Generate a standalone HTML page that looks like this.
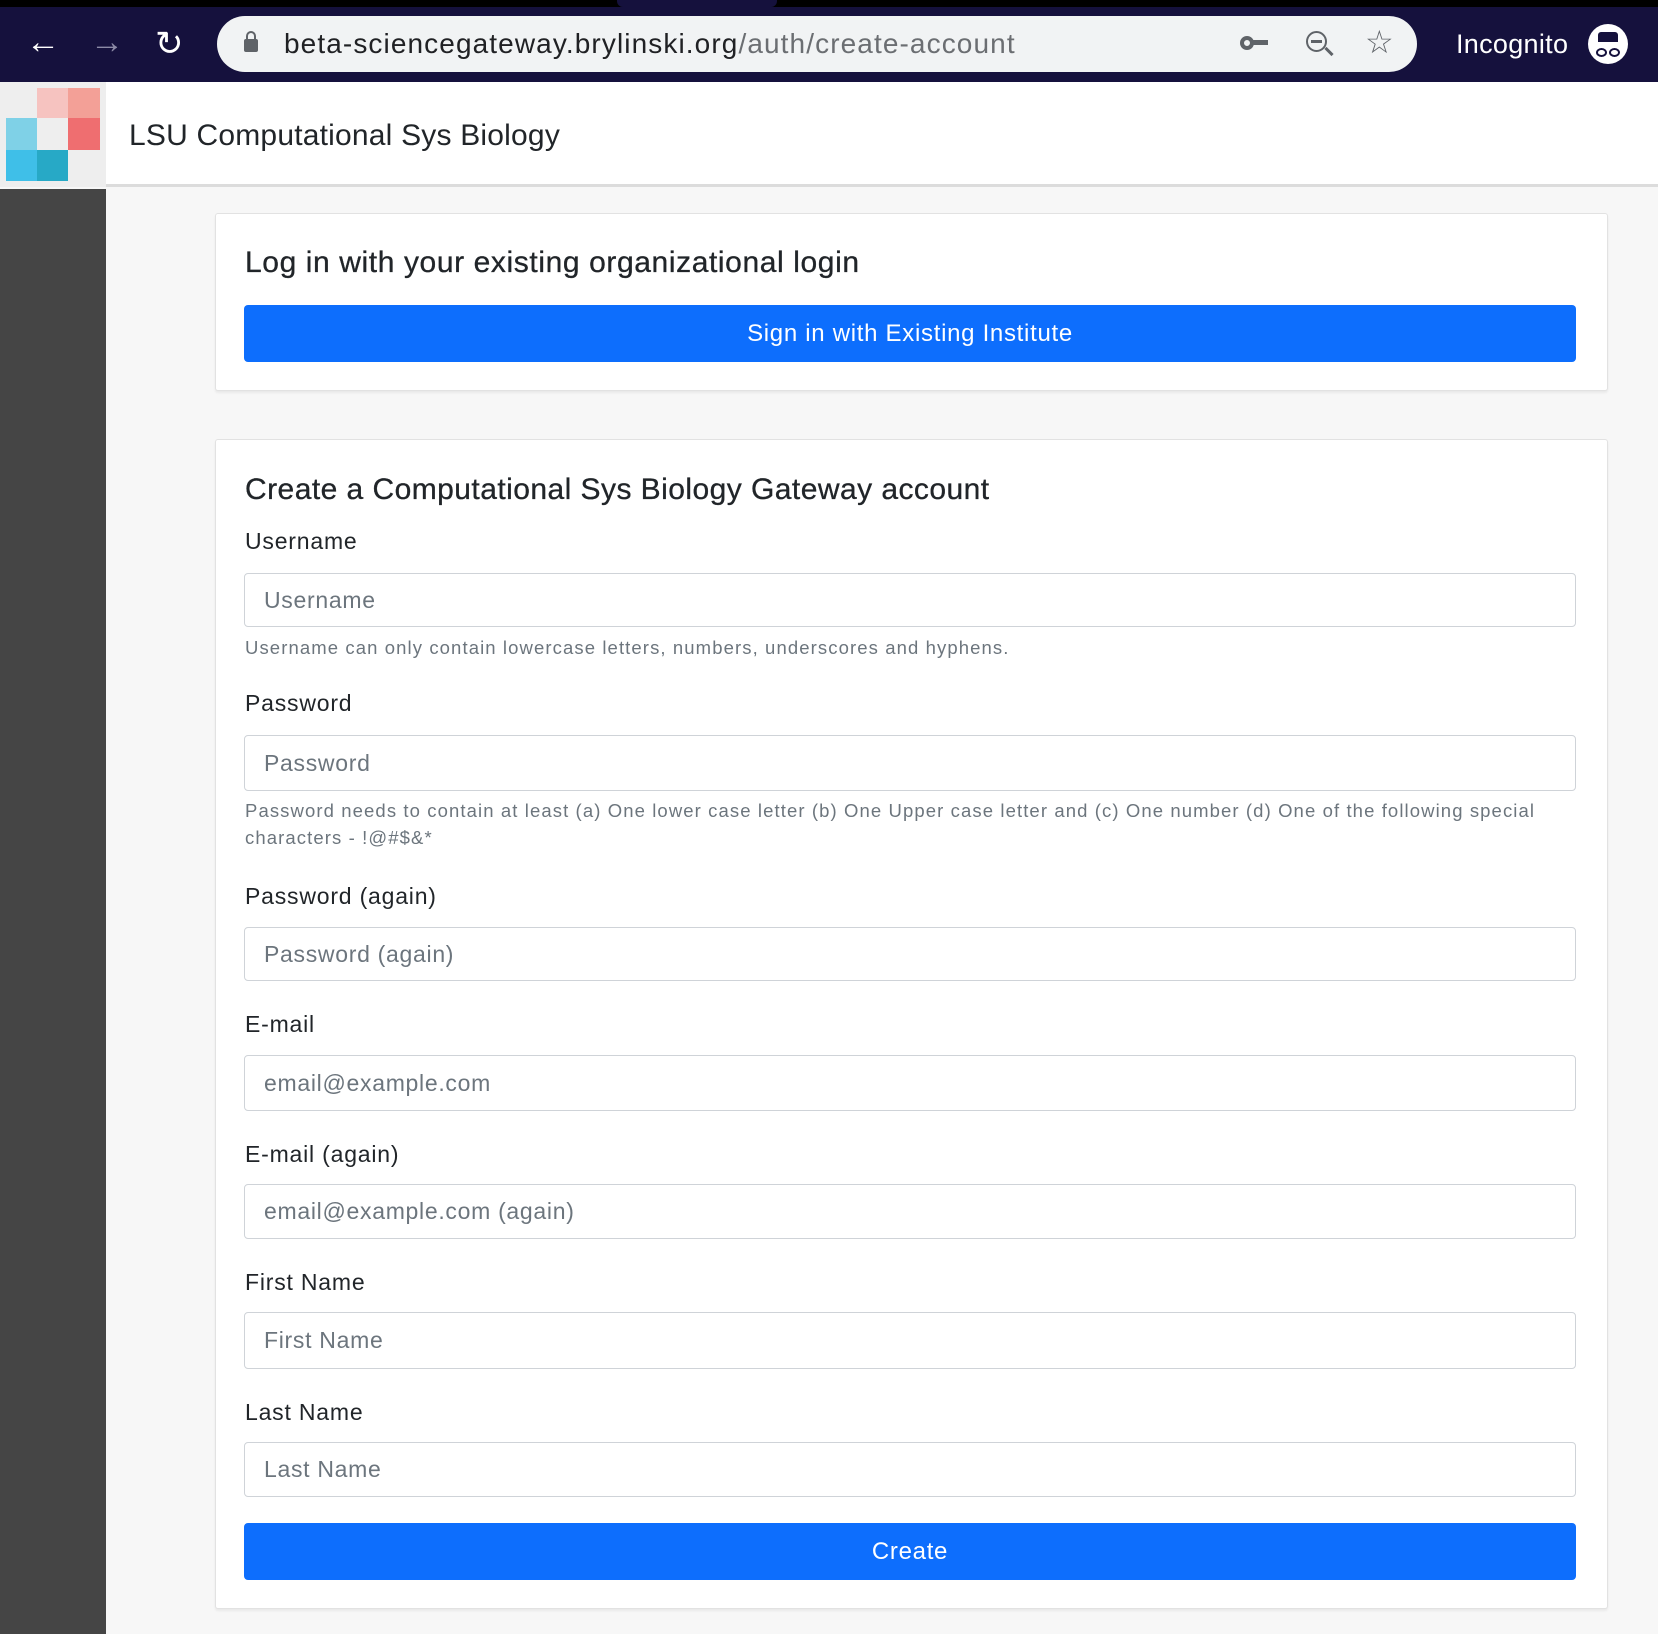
<!DOCTYPE html>
<html><head><meta charset="utf-8"><style>
*{box-sizing:border-box;margin:0;padding:0}
body{width:1658px;height:1634px;overflow:hidden;background:#f7f7f7;font-family:"Liberation Sans",sans-serif;position:relative;color:#212529}
.a{position:absolute}
.lbl{position:absolute;left:245px;font-size:23px;color:#212529;line-height:28px;letter-spacing:0.8px}
.inp{position:absolute;left:244px;width:1332px;border:1.5px solid #cfd3d8;border-radius:4px;background:#fff;font-size:23px;color:#6c757d;padding-left:19px;display:flex;align-items:center;letter-spacing:0.7px}
.help{position:absolute;left:245px;font-size:18.5px;color:#6c757d;line-height:27px;letter-spacing:1.1px}
.btn{position:absolute;left:244px;width:1332px;background:#0d6efd;border-radius:4px;color:#fff;font-size:24px;display:flex;align-items:center;justify-content:center;letter-spacing:0.7px}
.card{position:absolute;left:215px;width:1393px;background:#fff;border:1.5px solid #e2e2e2;border-radius:3px;box-shadow:0 2px 2px rgba(0,0,0,.06)}
h2{position:absolute;left:245px;font-size:30px;font-weight:normal;color:#212529;line-height:36px;-webkit-text-stroke:0.3px #212529}
</style></head><body>
<div class="a" style="left:0;top:0;width:1658px;height:82px;background:#15113d"></div>
<div class="a" style="left:0;top:0;width:1658px;height:7px;background:#000"></div>
<div class="a" style="left:617px;top:0;width:160px;height:7px;background:#15113d;border-radius:0 0 6px 6px"></div>
<div class="a" style="left:26px;top:22px;color:#fff;font-size:34px;line-height:40px">&#8592;</div>
<div class="a" style="left:90px;top:22px;color:#8c8aa6;font-size:34px;line-height:40px">&#8594;</div>
<div class="a" style="left:155px;top:24px;color:#fff;font-size:34px;line-height:40px">&#8635;</div>
<div class="a" style="left:217px;top:16px;width:1200px;height:56px;background:#f1f3f4;border-radius:28px"></div>
<div class="a" style="left:244px;top:39px;width:14px;height:13px;background:#5f6368;border-radius:2px"></div>
<div class="a" style="left:246px;top:31px;width:10px;height:12px;border:2.5px solid #5f6368;border-radius:5px 5px 0 0"></div>
<div class="a" style="left:284px;top:27px;font-size:28px;line-height:34px;color:#202124;letter-spacing:1.1px">beta-sciencegateway.brylinski.org<span style="color:#6b6e72">/auth/create-account</span></div>
<div class="a" style="left:1240px;top:36px;width:14px;height:14px;border:4px solid #5f6368;border-radius:50%"></div>
<div class="a" style="left:1252px;top:40px;width:16px;height:5px;background:#5f6368"></div>
<div class="a" style="left:1306px;top:31px;width:21px;height:21px;border:2.5px solid #5f6368;border-radius:50%"></div>
<div class="a" style="left:1311px;top:40px;width:11px;height:2.5px;background:#5f6368"></div>
<div class="a" style="left:1324px;top:50px;width:10px;height:3px;background:#5f6368;transform:rotate(45deg)"></div>
<div class="a" style="left:1365px;top:24px;font-size:32px;color:#5f6368;line-height:36px">&#9734;</div>
<div class="a" style="left:1456px;top:27px;font-size:27px;color:#fff;line-height:34px;letter-spacing:0.3px">Incognito</div>
<div class="a" style="left:1588px;top:24px;width:40px;height:40px;background:#fff;border-radius:50%"></div>
<div class="a" style="left:1598px;top:32px;width:20px;height:10px;background:#15113d;border-radius:3px 3px 0 0"></div>
<div class="a" style="left:1596px;top:48px;width:11px;height:9px;border:2px solid #15113d;border-radius:50%"></div>
<div class="a" style="left:1609px;top:48px;width:11px;height:9px;border:2px solid #15113d;border-radius:50%"></div>

<div class="a" style="left:0;top:82px;width:1658px;height:105px;background:#fff;border-bottom:3px solid #dcdcdc"></div>
<div class="a" style="left:0;top:82px;width:106px;height:105px;background:#eeeeee"></div>
<div class="a" style="left:37px;top:88px;width:31px;height:30px;background:#f6c3c0"></div>
<div class="a" style="left:68px;top:88px;width:32px;height:30px;background:#f3a097"></div>
<div class="a" style="left:68px;top:118px;width:32px;height:32px;background:#ef6e70"></div>
<div class="a" style="left:6px;top:118px;width:31px;height:32px;background:#7fd1e7"></div>
<div class="a" style="left:6px;top:150px;width:31px;height:31px;background:#3fbfe8"></div>
<div class="a" style="left:37px;top:150px;width:31px;height:31px;background:#27a9c6"></div>
<div class="a" style="left:129px;top:118px;font-size:30px;line-height:36px;color:#212529;letter-spacing:0.2px">LSU Computational Sys Biology</div>
<div class="a" style="left:0;top:189px;width:106px;height:1445px;background:#454545"></div>

<div class="card" style="top:213px;height:178px"></div>
<h2 style="top:245px;letter-spacing:0.6px">Log in with your existing organizational login</h2>
<div class="btn" style="top:305px;height:57px">Sign in with Existing Institute</div>

<div class="card" style="top:439px;height:1170px"></div>
<h2 style="top:472px;letter-spacing:0.45px">Create a Computational Sys Biology Gateway account</h2>
<div class="lbl" style="top:527px">Username</div>
<div class="inp" style="top:573px;height:54px">Username</div>
<div class="help" style="top:634px">Username can only contain lowercase letters, numbers, underscores and hyphens.</div>
<div class="lbl" style="top:689px">Password</div>
<div class="inp" style="top:735px;height:56px">Password</div>
<div class="help" style="top:797px;width:1340px">Password needs to contain at least (a) One lower case letter (b) One Upper case letter and (c) One number (d) One of the following special characters - !@#$&amp;*</div>
<div class="lbl" style="top:882px">Password (again)</div>
<div class="inp" style="top:927px;height:54px">Password (again)</div>
<div class="lbl" style="top:1010px">E-mail</div>
<div class="inp" style="top:1055px;height:56px">email@example.com</div>
<div class="lbl" style="top:1140px">E-mail (again)</div>
<div class="inp" style="top:1184px;height:55px">email@example.com (again)</div>
<div class="lbl" style="top:1268px">First Name</div>
<div class="inp" style="top:1312px;height:57px">First Name</div>
<div class="lbl" style="top:1398px">Last Name</div>
<div class="inp" style="top:1442px;height:55px">Last Name</div>
<div class="btn" style="top:1523px;height:57px">Create</div>
</body></html>
